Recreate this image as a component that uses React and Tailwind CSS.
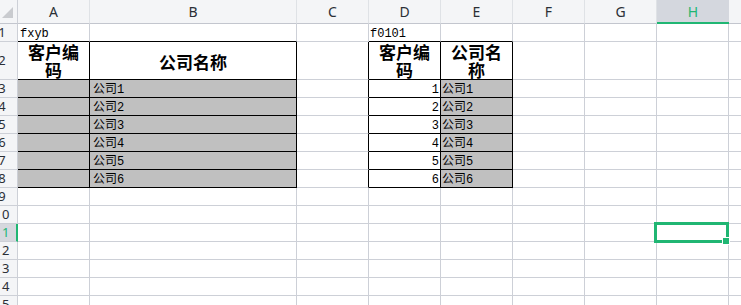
import React from "react";

const COLS = ["A", "B", "C", "D", "E", "F", "G", "H", "I"];
const ROWS = Array.from({ length: 15 }, (_, i) => i + 1);
const TABLE_COLS = ["A", "B", "D", "E"];

const cellFont = { fontFamily: '"Liberation Mono", "Noto Sans CJK SC", monospace' };
const boldFont = { fontFamily: '"Noto Sans CJK SC", sans-serif' };
const headFont = { fontFamily: '"Noto Sans", "Liberation Sans", sans-serif' };

function content(r, c) {
  if (r === 1 && c === "A") return <span className="text-[12px] leading-[14px] pl-[2px]">fxyb</span>;
  if (r === 1 && c === "D") return <span className="text-[12px] leading-[14px] pl-[1px]">f0101</span>;
  if (r === 2 && (c === "A" || c === "D"))
    return (
      <span style={boldFont} className="w-full text-center font-bold text-[17px] leading-[18px]">
        客户编<br />码
      </span>
    );
  if (r === 2 && c === "B")
    return (
      <span style={boldFont} className="w-full text-center font-bold text-[17px] leading-[18px] self-center pt-[3px]">
        公司名称
      </span>
    );
  if (r === 2 && c === "E")
    return (
      <span style={boldFont} className="w-full text-center font-bold text-[17px] leading-[18px]">
        公司名<br />称
      </span>
    );
  if (r >= 3 && r <= 8) {
    const n = r - 2;
    if (c === "B") return <span className="text-[12px] leading-[14px] pl-[3px]">公司{n}</span>;
    if (c === "E") return <span className="text-[12px] leading-[14px] pl-[1px]">公司{n}</span>;
    if (c === "D") return <span className="text-[12px] leading-[14px] w-full text-right pr-[1px]">{n}</span>;
  }
  return null;
}

function Cell({ r, c }) {
  const inTableRows = r >= 2 && r <= 8;
  const blackRight = inTableRows && ["A", "B", "C", "D", "E"].includes(c);
  const blackBottom = (r >= 1 && r <= 8) && TABLE_COLS.includes(c);
  const gray = r >= 3 && r <= 8 && (c === "A" || c === "B" || c === "E");
  const cls = [
    "flex items-end overflow-hidden whitespace-nowrap text-black border-r border-b",
    blackRight ? "border-r-black" : "border-r-[#cdd0d7]",
    blackBottom ? "border-b-black" : "border-b-[#cdd0d7]",
    gray ? "bg-[#c0c0c0]" : "bg-white",
  ].join(" ");
  return (
    <div className={cls} style={cellFont}>
      {content(r, c)}
    </div>
  );
}

export default function App() {
  return (
    <div className="relative w-[741px] h-[305px] overflow-hidden bg-white">
      <div className="grid grid-cols-[18px_72px_207px_72px_72px_72px_72px_72px_72px_72px] grid-rows-[24px_18px_38px_repeat(13,18px)]">
        {/* corner */}
        <div className="bg-[#f4f5f7] border-r border-b border-r-[#cdd0d7] border-b-[#c3c6ce] relative">
          <svg width="17" height="23" className="absolute left-0 top-0">
            <polygon points="2,18 13,18 13,7" fill="#c9cbcf" />
          </svg>
        </div>
        {COLS.map((c) =>
          c === "H" ? (
            <div
              key={c}
              style={headFont}
              className="bg-[#d4d7de] border-b-2 border-b-[#20b673] flex items-center justify-center text-[14px] text-[#20b673]"
            >
              {c}
            </div>
          ) : (
            <div
              key={c}
              style={headFont}
              className="bg-[#f4f5f7] border-r border-b border-r-[#dfe2e6] border-b-[#c3c6ce] flex items-center justify-center text-[14px] text-[#2b2f36]"
            >
              {c}
            </div>
          )
        )}
        {ROWS.map((r) => (
          <React.Fragment key={r}>
            {r === 11 ? (
              <div
                style={headFont}
                className="bg-[#d6d8de] border-r-2 border-b border-r-[#20b673] border-b-[#cdd0d7] flex justify-end items-center overflow-hidden text-[13px] text-[#20b673]"
              >
                <span className="w-[30px] shrink-0 text-center mr-[-1px]">{r}</span>
              </div>
            ) : (
              <div
                style={headFont}
                className="bg-[#f4f5f7] border-r border-b border-r-[#cdd0d7] border-b-[#cdd0d7] flex justify-end items-center overflow-hidden text-[13px] text-[#2b2f36]"
              >
                <span className="w-[30px] shrink-0 text-center">{r}</span>
              </div>
            )}
            {COLS.map((c) => (
              <Cell key={c} r={r} c={c} />
            ))}
          </React.Fragment>
        ))}
      </div>
      {/* selection */}
      <div className="absolute left-[654px] top-[222px] w-[75px] h-[21px] border-[3px] border-[#20b673]" />
      <div className="absolute left-[722px] top-[237px] w-[8px] h-[8px] bg-[#20b673] border border-white" />
    </div>
  );
}
